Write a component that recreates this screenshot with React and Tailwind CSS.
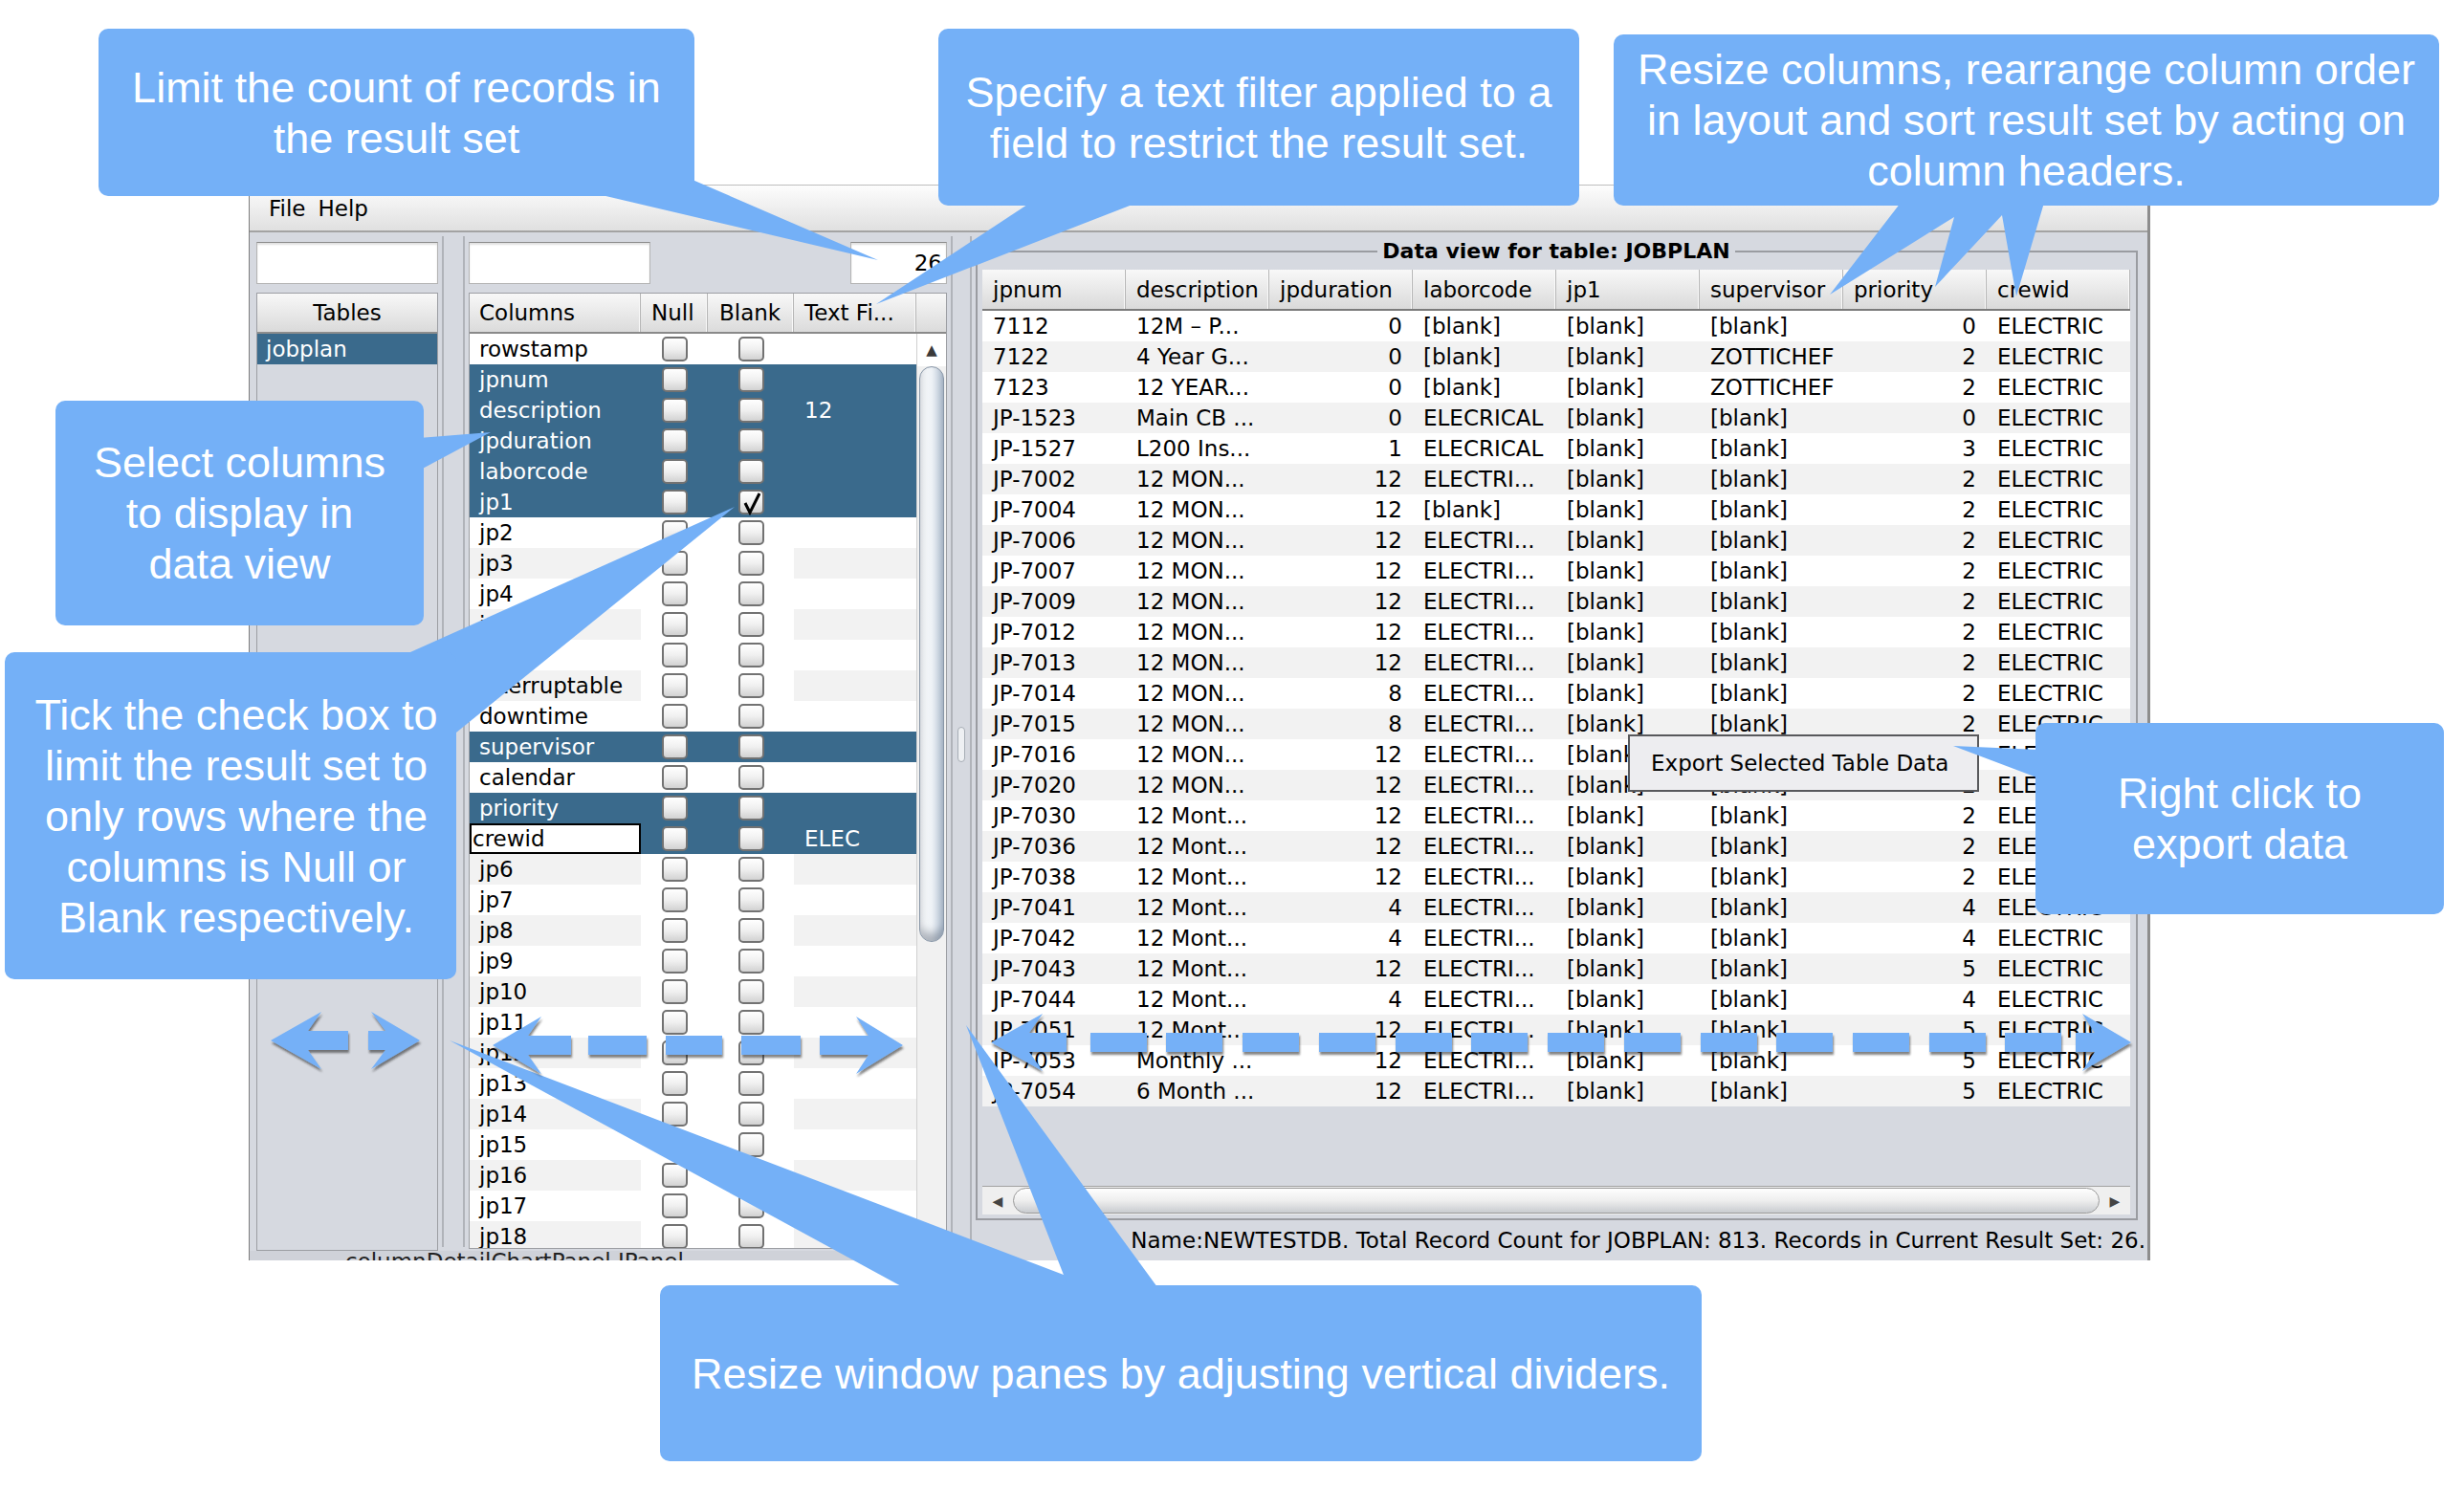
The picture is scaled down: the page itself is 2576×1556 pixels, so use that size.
import React from 'react'

const columnRows = [
  { name: 'rowstamp' },
  { name: 'jpnum', sel: true },
  { name: 'description', sel: true, filter: '12' },
  { name: 'jpduration', sel: true },
  { name: 'laborcode', sel: true },
  { name: 'jp1', sel: true, blank: true },
  { name: 'jp2' },
  { name: 'jp3' },
  { name: 'jp4' },
  { name: 'jp5' },
  { name: 'orgid' },
  { name: 'interruptable' },
  { name: 'downtime' },
  { name: 'supervisor', sel: true },
  { name: 'calendar' },
  { name: 'priority', sel: true },
  { name: 'crewid', sel: true, editing: true, filter: 'ELEC' },
  ...['jp6', 'jp7', 'jp8', 'jp9', 'jp10', 'jp11', 'jp12', 'jp13', 'jp14', 'jp15', 'jp16', 'jp17', 'jp18'].map((name) => ({ name })),
]

const headers = ['jpnum', 'description', 'jpduration', 'laborcode', 'jp1', 'supervisor', 'priority', 'crewid']

const E = 'ELECTRI...'
const B = '[blank]'
const dataRows = [
  ['7112', '12M – P...', '0', B, B, B, '0'],
  ['7122', '4 Year G...', '0', B, B, 'ZOTTICHEF', '2'],
  ['7123', '12 YEAR...', '0', B, B, 'ZOTTICHEF', '2'],
  ['JP-1523', 'Main CB ...', '0', 'ELECRICAL', B, B, '0'],
  ['JP-1527', 'L200 Ins...', '1', 'ELECRICAL', B, B, '3'],
  ['JP-7002', '12 MON...', '12', E, B, B, '2'],
  ['JP-7004', '12 MON...', '12', B, B, B, '2'],
  ['JP-7006', '12 MON...', '12', E, B, B, '2'],
  ['JP-7007', '12 MON...', '12', E, B, B, '2'],
  ['JP-7009', '12 MON...', '12', E, B, B, '2'],
  ['JP-7012', '12 MON...', '12', E, B, B, '2'],
  ['JP-7013', '12 MON...', '12', E, B, B, '2'],
  ['JP-7014', '12 MON...', '8', E, B, B, '2'],
  ['JP-7015', '12 MON...', '8', E, B, B, '2'],
  ['JP-7016', '12 MON...', '12', E, B, B, '2'],
  ['JP-7020', '12 MON...', '12', E, B, B, '2'],
  ['JP-7030', '12 Mont...', '12', E, B, B, '2'],
  ['JP-7036', '12 Mont...', '12', E, B, B, '2'],
  ['JP-7038', '12 Mont...', '12', E, B, B, '2'],
  ['JP-7041', '12 Mont...', '4', E, B, B, '4'],
  ['JP-7042', '12 Mont...', '4', E, B, B, '4'],
  ['JP-7043', '12 Mont...', '12', E, B, B, '5'],
  ['JP-7044', '12 Mont...', '4', E, B, B, '4'],
  ['JP-7051', '12 Mont...', '12', E, B, B, '5'],
  ['JP-7053', 'Monthly ...', '12', E, B, B, '5'],
  ['JP-7054', '6 Month ...', '12', E, B, B, '5'],
].map((r) => [...r, 'ELECTRIC'])

function TextField({ className = '', children }) {
  return (
    <div className={`h-[44px] bg-white border border-[#b4b4b4] border-t-[#8c8c8c] shadow-[inset_0_2px_2px_rgba(0,0,0,0.12)] flex items-center justify-end pr-[4px] ${className}`}>
      {children}
    </div>
  )
}

function Check({ checked }) {
  return (
    <div className="relative w-[27px] h-[26px] rounded-[5px] border-2 border-[#727272] bg-gradient-to-b from-white via-[#f0f0f0] to-[#d2d2d2]">
      {checked && (
        <svg className="absolute left-[0px] top-[-3px]" width="27" height="28" viewBox="0 0 27 28">
          <path d="M5 15 L10 25 L20 5" fill="none" stroke="#000" strokeWidth="3" />
        </svg>
      )}
    </div>
  )
}

function HeaderCell({ className = '', children }) {
  return (
    <div className={`h-full flex items-center border-r border-[#b6b6b6] shadow-[inset_-1px_0_0_#fafafa] ${className}`}>{children}</div>
  )
}

function LeftPanel() {
  return (
    <div className="w-[199px] pl-[7px] pr-[2px] pt-[10px] flex flex-col gap-[9px]">
      <TextField />
      <div className="flex-1 flex flex-col border border-[#9c9ea3]">
        <div className="h-[42px] shrink-0 flex items-center justify-center border-b-2 border-[#8d8d8d] bg-gradient-to-b from-[#f8f8f8] to-[#dadada]">
          Tables
        </div>
        <div className="h-[32px] flex items-center pl-[9px] bg-[#3a6a8c] text-white">jobplan</div>
      </div>
    </div>
  )
}

function Divider({ grip }) {
  return (
    <div className="flex justify-between px-[2px] py-[4px] w-full">
      <div className="w-[2px] bg-[#b0b3b9]" />
      <div className="flex-1 flex flex-col items-center">
        {grip && <div className="mt-[513px] w-[8px] h-[37px] rounded-full border border-[#a7adb5] bg-[#eef0f3]" />}
      </div>
      <div className="w-[2px] bg-[#b0b3b9]" />
    </div>
  )
}

function ColumnRow({ row, index }) {
  const stripe = index % 2 === 1 ? 'bg-[#f2f2f2]' : 'bg-white'
  const sel = row.sel
  return (
    <div className={`h-[32px] shrink-0 flex items-center ${sel ? 'bg-[#3a6a8c] text-white' : ''}`}>
      {row.editing ? (
        <div className="w-[179px] h-full flex items-center border-2 border-black bg-white text-black pl-[1px]">{row.name}</div>
      ) : (
        <div className={`w-[179px] h-full flex items-center pl-[10px] ${sel ? '' : stripe}`}>{row.name}</div>
      )}
      <div className={`w-[70px] h-full flex items-center justify-center ${sel ? '' : 'bg-white'}`}>
        <Check />
      </div>
      <div className={`w-[90px] h-full flex items-center justify-center ${sel ? '' : 'bg-white'}`}>
        <Check checked={row.blank} />
      </div>
      <div className={`w-[128px] h-full flex items-center pl-[11px] ${sel ? '' : stripe}`}>{row.filter}</div>
    </div>
  )
}

function MiddlePanel() {
  return (
    <div className="w-[504px] px-[2px] pt-[10px] pb-[2px] flex flex-col gap-[9px]">
      <div className="flex justify-between">
        <TextField className="w-[190px]" />
        <TextField className="w-[101px]">26</TextField>
      </div>
      <div className="flex-1 min-h-0 flex flex-col border border-[#9c9ea3] bg-white overflow-hidden">
        <div className="h-[42px] shrink-0 flex border-b-2 border-[#8a8a8a] bg-gradient-to-b from-[#f8f8f8] to-[#dbdbdb]">
          <HeaderCell className="w-[179px] pl-[10px]">Columns</HeaderCell>
          <HeaderCell className="w-[70px] pl-[11px]">Null</HeaderCell>
          <HeaderCell className="w-[90px] pl-[12px]">Blank</HeaderCell>
          <HeaderCell className="w-[128px] pl-[11px]">Text Fi...</HeaderCell>
          <div className="flex-1" />
        </div>
        <div className="flex-1 min-h-0 flex">
          <div className="w-[467px] flex flex-col">
            {columnRows.map((row, i) => (
              <ColumnRow key={row.name} row={row} index={i} />
            ))}
          </div>
          <div className="flex-1 flex flex-col bg-[#f1f1f1] border-l border-[#d0d0d0]">
            <div className="h-[34px] shrink-0 flex items-center justify-center text-[15px] text-[#3a3a3a] bg-white">▲</div>
            <div className="mx-[2px] h-[602px] shrink-0 rounded-[14px] border border-[#8795a6] bg-gradient-to-r from-[#fbfcfd] via-[#eef2f6] to-[#bccada] shadow-[inset_0_-8px_8px_rgba(50,60,80,0.35)]" />
            <div className="flex-1" />
            <div className="h-[30px] shrink-0 flex items-center justify-center text-[15px] text-[#3a3a3a]">▼</div>
          </div>
        </div>
      </div>
    </div>
  )
}

function RightPanel() {
  return (
    <div className="w-[1227px] flex flex-col">
      <fieldset className="mt-[7px] ml-[2px] mr-[10px] min-w-0 border-2 border-[#9a9ca1] pl-[5px] pr-[6px] pt-[6px] pb-[4px]">
        <legend className="mx-auto px-[5px] font-bold text-[22px] leading-[26px]">Data view for table: JOBPLAN</legend>
        <div className="h-[988px] flex flex-col">
          <div className="h-[43px] shrink-0 flex border-b-2 border-[#7b7b7b] bg-gradient-to-b from-[#f8f8f8] to-[#dadada]">
            {headers.map((h) => (
              <HeaderCell key={h} className="w-[150px] pl-[11px]">{h}</HeaderCell>
            ))}
          </div>
          {dataRows.map((r, i) => (
            <div key={r[0]} className={`h-[32px] shrink-0 flex items-center ${i % 2 === 1 ? 'bg-[#f2f2f2]' : 'bg-white'}`}>
              {r.map((v, j) => (
                <div key={j} className={`w-[150px] px-[11px] whitespace-nowrap ${j === 2 || j === 6 ? 'text-right' : ''}`}>{v}</div>
              ))}
            </div>
          ))}
          <div className="flex-1" />
          <div className="h-[30px] shrink-0 flex border-t border-[#a2a2a2] bg-[#efefef]">
            <div className="w-[32px] flex items-center justify-center text-[14px] text-[#444]">◀</div>
            <div className="flex-1 my-[1px] rounded-[14px] border border-[#9a9a9a] bg-gradient-to-b from-[#fefefe] via-[#eeeeee] to-[#c9ccd0]" />
            <div className="w-[32px] flex items-center justify-center text-[14px] text-[#444]">▶</div>
          </div>
        </div>
      </fieldset>
      <div className="flex-1 flex items-center justify-end pr-[2px] whitespace-nowrap">
        Name:NEWTESTDB. Total Record Count for JOBPLAN: 813. Records in Current Result Set: 26.
      </div>
    </div>
  )
}

function AppWindow() {
  return (
    <div className="w-[1988px] h-[1125px] flex flex-col border-l border-l-[#7d7d7d] border-r-[3px] border-r-[#8d8d8d]">
      <div className="h-[50px] shrink-0 flex items-center gap-[13px] pl-[20px] border-t border-b-2 border-t-[#bdbdbd] border-b-[#a3a3a3] bg-gradient-to-b from-[#fdfdfd] to-[#e0e0e0]">
        <span>File</span>
        <span>Help</span>
      </div>
      <div className="flex-1 min-h-0 flex bg-[#d6d9e0]">
        <div className="w-[731px] flex flex-col">
          <div className="flex-1 min-h-0 flex">
            <LeftPanel />
            <div className="w-[28px] flex">
              <Divider />
            </div>
            <MiddlePanel />
          </div>
          <div className="h-[10px] shrink-0 overflow-hidden pl-[100px] bg-[#cfd2d9]">
            <div className="mt-[-2px] leading-[26px] text-[#222]">columnDetailChartPanel JPanel</div>
          </div>
        </div>
        <div className="w-[26px] flex">
          <Divider grip />
        </div>
        <RightPanel />
      </div>
    </div>
  )
}

function Callout({ className = '', children }) {
  return (
    <div className={`absolute flex items-center justify-center rounded-[10px] bg-[#74b0f7] text-center text-white text-[45px] leading-[53px] font-['Liberation_Sans',Arial,sans-serif] ${className}`}>
      <div>{children}</div>
    </div>
  )
}

const dataDashes = [1140, 1219, 1299, 1379, 1459, 1538, 1618, 1698, 1778, 1857, 1937, 2017, 2096]

function Annotations() {
  return (
    <>
      <div className="absolute left-[1702px] top-[768px] w-[367px] h-[60px] bg-[#ededf0] border-2 border-[#58595c] flex items-center pl-[22px] whitespace-nowrap">
        Export Selected Table Data
      </div>
      <svg className="absolute left-0 top-0" width="2576" height="1556" viewBox="0 0 2576 1556">
        <defs>
          <filter id="sh" x="-10%" y="-50%" width="120%" height="200%">
            <feDropShadow dx="1" dy="3" stdDeviation="1.2" floodColor="#1a1a1a" floodOpacity="0.55" />
          </filter>
        </defs>
        <g fill="#74b0f7">
          <polygon points="612,200 724,188 918,272" />
          <polygon points="1080,210 1194,210 916,318" />
          <polygon points="1987,212 1913,308 2043,227 2023,300 2093,225 2108,310 2137,212" />
          <polygon points="438,458 438,492 513,452" />
          <polygon points="420,686 768,530 477,766" />
          <polygon points="2042,780 2132,784 2132,814" />
          <polygon points="470,1088 944,1346 1146,1346" />
          <polygon points="1010,1072 1117,1346 1210,1346" />
        </g>
        <g fill="#74b0f7" filter="url(#sh)">
          <polygon points="283,1088 336,1058 322,1078 364,1078 364,1098 322,1098 336,1118" />
          <polygon points="385,1078 403,1078 388,1058 439,1088 388,1118 403,1098 385,1098" />
          <polygon points="515,1093 566,1063 552,1083 597,1083 597,1103 552,1103 566,1123" />
          <rect x="615" y="1083" width="61" height="20" />
          <rect x="696" y="1083" width="59" height="20" />
          <rect x="775" y="1083" width="62" height="20" />
          <polygon points="857,1083 908,1083 895,1063 944,1093 895,1123 908,1103 857,1103" />
          <polygon points="1036,1090 1090,1060 1076,1080 1115,1080 1115,1100 1076,1100 1090,1120" />
          {dataDashes.map((x) => (
            <rect key={x} x={x} y="1080" width="59" height="20" />
          ))}
          <polygon points="2170,1080 2190,1080 2177,1060 2228,1090 2177,1120 2190,1100 2170,1100" />
        </g>
      </svg>
      <Callout className="left-[103px] top-[30px] w-[623px] h-[175px]">
        Limit the count of records in
        <br />
        the result set
      </Callout>
      <Callout className="left-[981px] top-[30px] w-[670px] h-[185px]">
        Specify a text filter applied to a
        <br />
        field to restrict the result set.
      </Callout>
      <Callout className="left-[1687px] top-[36px] w-[863px] h-[179px]">
        Resize columns, rearrange column order
        <br />
        in layout and sort result set by acting on
        <br />
        column headers.
      </Callout>
      <Callout className="left-[58px] top-[419px] w-[385px] h-[235px]">
        Select columns
        <br />
        to display in
        <br />
        data view
      </Callout>
      <Callout className="left-[5px] top-[682px] w-[472px] h-[342px] pl-[12px]">
        Tick the check box to
        <br />
        limit the result set to
        <br />
        only rows where the
        <br />
        columns is Null or
        <br />
        Blank respectively.
      </Callout>
      <Callout className="left-[2128px] top-[756px] w-[427px] h-[200px]">
        Right click to
        <br />
        export data
      </Callout>
      <Callout className="left-[690px] top-[1344px] w-[1089px] h-[184px]">
        Resize window panes by adjusting vertical dividers.
      </Callout>
    </>
  )
}

export default function App() {
  return (
    <div className="relative w-[2576px] h-[1556px] overflow-hidden bg-white font-['DejaVu_Sans',sans-serif] text-[23px] leading-[26px] text-black">
      <div className="pt-[193px] pl-[260px]">
        <AppWindow />
      </div>
      <Annotations />
    </div>
  )
}
